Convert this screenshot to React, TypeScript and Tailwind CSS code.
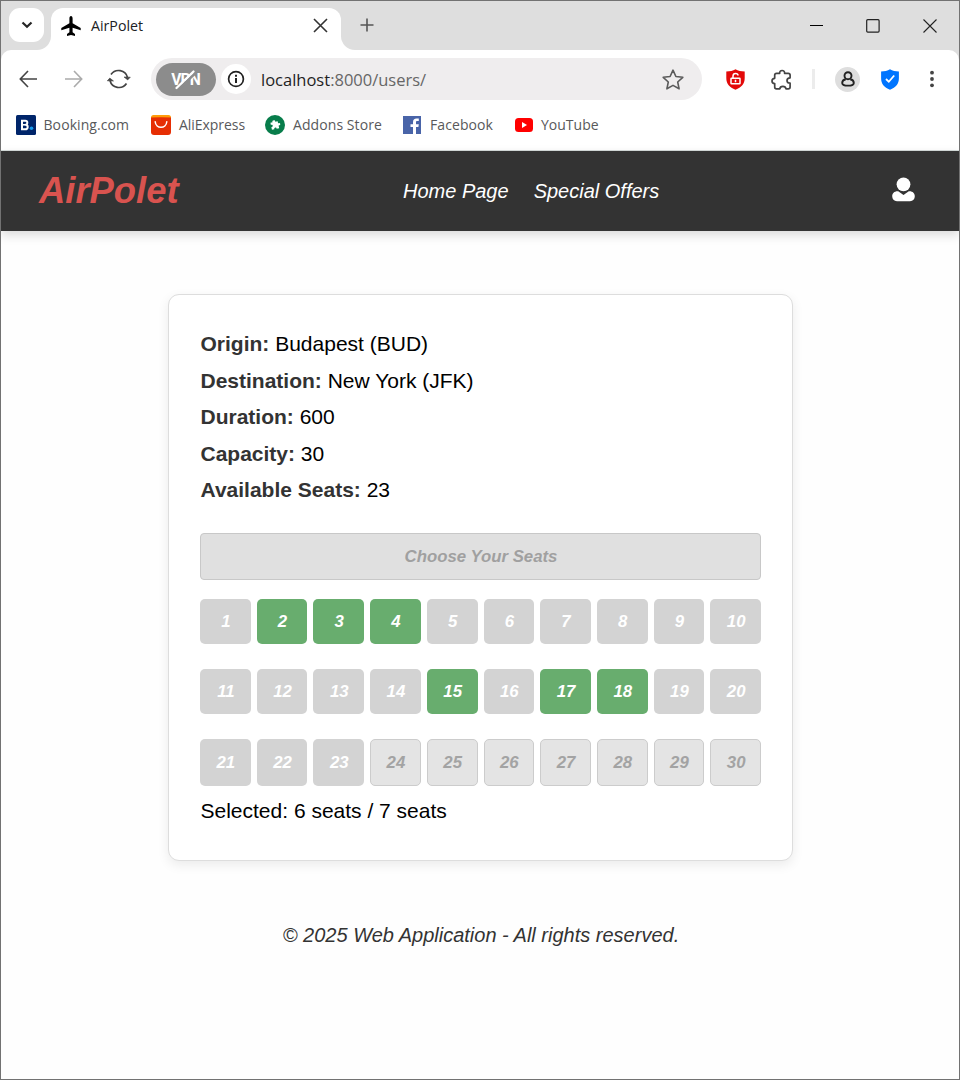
import React from "react";

const bookmarkText = "whitespace-nowrap font-['Open_Sans',sans-serif] text-[14px] leading-5 text-[#58595b]";

const taken = [1, 5, 6, 7, 8, 9, 10, 11, 12, 13, 14, 16, 19, 20, 21, 22, 23];
const selected = [2, 3, 4, 15, 17, 18];

function Seat({ n }: { n: number }) {
  const base = "flex items-center justify-center rounded-[5px] pl-px pt-0.5 text-[16.8px] font-bold italic leading-none ";
  if (selected.includes(n)) return <button className={base + "bg-[#68ad6e] text-white"}>{n}</button>;
  if (taken.includes(n)) return <button className={base + "bg-[#d3d3d3] text-white"}>{n}</button>;
  return <button className={base + "border border-[#cccccc] bg-[#e4e4e4] text-[#a3a3a3]"}>{n}</button>;
}

function TabBar() {
  return (
    <div className="flex h-[49px] shrink-0 items-end bg-[#dedede] pl-2">
      <div className="relative z-10 mb-2 flex h-[34px] w-[35px] items-center justify-center rounded-[11px] bg-white">
        <svg width="12" height="8" viewBox="0 0 12 8" fill="none" stroke="#262626" strokeWidth="2.2"><path d="M1.5 1.5 6 5.8l4.5-4.3" /></svg>
      </div>
      <div className="relative ml-[7px] flex h-[42px] w-[290px] items-center rounded-t-[12px] bg-white pl-2.5">
        <span className="absolute -left-[15px] bottom-0 size-[15px] bg-white"><span className="block size-full rounded-br-[14px] bg-[#dedede]" /></span>
        <span className="absolute -right-[15px] bottom-0 size-[15px] bg-white"><span className="block size-full rounded-bl-[14px] bg-[#dedede]" /></span>
        <div className="-mt-[7px] flex w-full items-center">
          <svg width="20" height="20" viewBox="0 0 20 20"><path d="M10 0c1 0 1.6 1.1 1.6 2.5v4.8l8.1 4.7v2.2l-8.1-2.4v4.5l2.4 1.8V20L10 19l-4 1v-1.9l2.4-1.8v-4.5L.3 14.2V12l8.1-4.7V2.5C8.4 1.1 9 0 10 0Z" fill="#000" /></svg>
          <span className="ml-2.5 font-['Open_Sans',sans-serif] text-[14.2px] leading-5 text-[#202124]">AirPolet</span>
          <svg className="ml-auto mr-[13px]" width="15" height="15" viewBox="0 0 15 15" stroke="#333" strokeWidth="1.6"><path d="m1 1 13 13M14 1 1 14" /></svg>
        </div>
      </div>
      <svg className="mb-[18px] ml-[19px]" width="14" height="14" viewBox="0 0 14 14" stroke="#555" strokeWidth="1.6"><path d="M7 .5v13M.5 7h13" /></svg>
      <div className="mb-[17px] ml-auto mr-[22px] flex items-center gap-[43px]">
        <svg width="13" height="14" viewBox="0 0 13 14" stroke="#000" shapeRendering="crispEdges"><path d="M0 6.5h13" /></svg>
        <svg width="14" height="14" viewBox="0 0 14 14" fill="none" stroke="#222" strokeWidth="1.2"><rect x=".7" y=".7" width="12.4" height="12.4" rx="1" /></svg>
        <svg width="14" height="14" viewBox="0 0 14 14" stroke="#222" strokeWidth="1.1"><path d="m.5.5 13 13M13.500.5l-13 13" /></svg>
      </div>
    </div>
  );
}

function Toolbar() {
  return (
    <div className="bg-[#dedede]">
      <div className="flex h-[58px] items-center rounded-t-[10px] bg-white">
        <svg className="ml-[18px] -mt-px" width="19" height="18" viewBox="0 0 19 18" fill="none" stroke="#444" strokeWidth="1.6"><path d="M18 9H1.500M9 1 1.300 9 9 17" /></svg>
        <svg className="ml-[26px] -mt-px" width="19" height="18" viewBox="0 0 19 18" fill="none" stroke="#ababab" strokeWidth="1.6"><path d="M1 9h16.500M10 1l7.700 8L10 17" /></svg>
        <svg className="-mt-px ml-6" width="24" height="20" viewBox="0 0 24 20" fill="none" stroke="#444" strokeWidth="1.7">
          <path d="M4 5.500A9.200 9.200 0 0 1 20.500 8.500M19.500 14.500A9.200 9.200 0 0 1 3 11.500" />
          <path d="m17 8 6.300.2-2.600 2.700ZM6.500 12 .3 11.800l2.500-2.700Z" fill="#444" strokeWidth=".6" />
        </svg>
        <div className="ml-5 flex h-[42px] w-[551px] items-center rounded-full bg-[#efedee] pl-[5px]">
          <div className="relative flex h-[33px] w-[60px] shrink-0 items-center justify-center rounded-full bg-[#8c8c8c] font-['Roboto',sans-serif] text-[17px] font-bold leading-none text-white">
            <span className="pt-px inline-block scale-x-[0.92] tracking-[-1px]">VPN</span>
            <svg className="absolute left-4 top-1.5" width="28" height="22" viewBox="0 0 28 22" strokeLinecap="round"><path d="M7 19.500 23.500 4" stroke="#8c8c8c" strokeWidth="2.500" /><path d="M4.500 19 21.500 2.500" stroke="#fff" strokeWidth="2.300" /></svg>
          </div>
          <div className="ml-[5px] flex size-[30px] shrink-0 items-center justify-center rounded-full bg-white">
            <svg width="18" height="18" viewBox="0 0 18 18" fill="none" stroke="#222" strokeWidth="1.700"><circle cx="9" cy="9" r="7.400" /><path d="M9 8v5M9 4.800v1.900" strokeWidth="2" /></svg>
          </div>
          <span className="ml-2.5 pt-px font-['Open_Sans',sans-serif] text-[16.5px] leading-6 text-[#666]"><span className="text-[#1f1f1f]">localhost</span>:8000/users/</span>
          <svg className="ml-auto mr-[18px] mt-px" width="22" height="22" viewBox="0 0 22 22" fill="none" stroke="#5b5b5b" strokeWidth="1.600" strokeLinejoin="round"><path d="m11 1.200 2.900 6.300 6.900.8-5.100 4.700 1.400 6.800-6.100-3.400-6.100 3.400 1.400-6.800L1.200 8.300l6.900-.8L11 1.200Z" /></svg>
        </div>
        <svg className="ml-6" width="19" height="21" viewBox="0 0 19 21" fill="none"><path d="M9.500.3C12 2 15 2.500 18.700 2.500V9c0 6-3.300 9.500-9.200 11.700C3.600 18.500.3 15 .3 9V2.500C4 2.500 7 2 9.500.3Z" fill="#e30909" /><g stroke="#fff" strokeWidth="1.500"><rect x="5" y="9.200" width="9" height="5.500" rx=".5" /><path d="M7 9V7C7 5 8 4.400 9.500 4.400S12 5.200 12 6.400M9.500 10.700v2.500" /></g></svg>
        <svg className="ml-[26px] mt-0.5" width="22" height="22" viewBox="0 0 22 22" fill="none" stroke="#444" strokeWidth="1.700" strokeLinejoin="round"><path d="M5.500 4.300H8.700C8.500 2.500 9.500 1.500 11.100 1.500S13.800 2.500 13.600 4.300h3.600c1.300 0 1.900.6 1.900 1.800v2.700c-2 0-3.100 1-3.100 2.700s1.100 2.700 3.100 2.700V18c0 1.200-.6 1.800-1.900 1.800H15c-.3-1.700-1.600-2.500-3.100-2.500s-2.900.8-3.100 2.500H5.500c-1.200 0-1.800-.6-1.800-1.800v-3.500C2 14.400 1 13.400 1 11.900S2 9.400 3.700 9.300V6.100c0-1.200.6-1.800 1.800-1.800Z" /></svg>
        <span className="ml-[19px] h-5 w-[3px] bg-[#ececec]" />
        <span className="ml-5 flex size-[25px] items-center justify-center rounded-full bg-[#dedede]"><svg width="14" height="16" viewBox="0 0 14 16" fill="none" stroke="#222" strokeWidth="1.900"><circle cx="7" cy="4.700" r="3.500" /><path d="M4.800 8.200C2.300 8.700 1.200 10.100 1.200 11.900c0 1.800 1.400 2.700 5.800 2.700s5.800-.9 5.800-2.700c0-1.800-1.100-3.200-3.600-3.700" /></svg></span>
        <svg className="ml-[21px]" width="18" height="21" viewBox="0 0 18 21" fill="none"><path d="M9 .3C11.500 2 14.500 2.500 17.900 2.500V9c0 6-3 9.500-8.900 11.700C3.100 18.500.1 15 .1 9V2.500C3.500 2.500 6.500 2 9 .3Z" fill="#0075ff" /><path d="m5 10 2.800 2.800L13.200 6.500" stroke="#fff" strokeWidth="1.800" /></svg>
        <svg className="ml-[31px] -mt-px" width="4" height="18" viewBox="0 0 4 18" fill="#444"><circle cx="2" cy="2.700" r="1.900" /><circle cx="2" cy="9" r="1.900" /><circle cx="2" cy="15.300" r="1.900" /></svg>
      </div>
    </div>
  );
}

function Bookmarks() {
  return (
    <div className="flex h-[43px] items-start border-b border-[#d5dcda] bg-white pl-[15px] pt-[7px]">
      <div className="flex w-[135px] items-center gap-[7.500px]">
        <svg width="20" height="20" viewBox="0 0 20 20" className="shrink-0"><rect width="20" height="20" rx="1.500" fill="#00256a" /><path d="M6 5.800h3.300c2.700 0 2.600 3.500.3 3.900 3 .3 2.700 4.500-.3 4.500H6Z" fill="none" stroke="#fff" strokeWidth="2" /><path d="M6 9.800h4" stroke="#fff" strokeWidth="1.600" /><circle cx="15.500" cy="13.200" r="1.800" fill="#169bed" /></svg>
        <span className={bookmarkText + " tracking-[0.08px]"}>Booking.com</span>
      </div>
      <div className="flex w-[114px] items-center gap-2">
        <svg width="20" height="20" viewBox="0 0 20 20" className="shrink-0"><rect width="20" height="10" rx="2.500" fill="#ff9c0a" /><path d="M0 2.500q10-.6 20 0V17q0 3-3 3H3q-3 0-3-3Z" fill="#e62e04" /><path d="M4.200 6.800c.6 7.200 11 7.200 11.600 0" fill="none" stroke="#fff" strokeWidth="1.500" strokeLinecap="round" /></svg>
        <span className={bookmarkText + " -tracking-[0.05px]"}>AliExpress</span>
      </div>
      <div className="flex w-[138px] items-center gap-2">
        <svg width="20" height="20" viewBox="0 0 20 20" className="shrink-0"><circle cx="10" cy="10" r="10" fill="#087d4b" /><path transform="rotate(-12 10 10)" d="M6 6.800h2.200C7.300 4.500 11.700 4.500 10.900 6.800h2.500v2.300c2.600-.9 2.600 3 0 2.200v2.800h-2.600c.5-2.200-2.700-2.200-2.300 0H6v-2.800c2.200.5 2.200-2.700 0-2.200Z" fill="#fff" /></svg>
        <span className={bookmarkText + " tracking-[0.08px]"}>Addons Store</span>
      </div>
      <div className="flex w-[112px] items-center gap-[9px]">
        <svg width="18" height="18" viewBox="0 0 18 18" className="shrink-0"><rect width="18" height="18" fill="#4964a8" /><path d="M10 18v-7H7.500V8.200H10V6.300C10 3.700 11.300 2.500 13.600 2.500h2.200v2.600h-1.500c-1 0-1.300.5-1.300 1.400v1.700h2.800l-.4 2.800H13v7Z" fill="#fff" /></svg>
        <span className={bookmarkText + " tracking-[0.08px]"}>Facebook</span>
      </div>
      <div className="flex items-center gap-2">
        <svg width="18" height="14" viewBox="0 0 18 14" className="shrink-0"><rect width="18" height="14" rx="3.500" fill="#f00" /><path d="m7 4 5 3-5 3Z" fill="#fff" /></svg>
        <span className={bookmarkText}>YouTube</span>
      </div>
    </div>
  );
}

export default function App() {
  return (
    <div className="flex h-[1080px] w-[960px] flex-col overflow-hidden border border-[#727272] bg-[#fefefe] font-['Liberation_Sans',Arial,sans-serif]">
      <TabBar />
      <Toolbar />
      <Bookmarks />
      <header className="flex h-20 shrink-0 items-center justify-between bg-[#333] pl-[38px] pr-11 text-white shadow-[0_4px_10px_rgba(0,0,0,0.15)]">
        <div className="w-[364px] text-[36.4px] font-bold italic leading-none text-[#d9534f]">AirPolet</div>
        <nav className="flex flex-1 gap-[25px] text-[20px] italic leading-6"><a>Home Page</a><a>Special Offers</a></nav>
        <svg className="-mt-1" width="23" height="25" viewBox="0 0 23 25" fill="#fff"><circle cx="11.500" cy="7.300" r="6.900" /><path d="M6.200 14.300 11.500 18.100 16.800 14.300C20.600 14 22.800 16.200 22.800 19.300S21 24.200 18 24.200H5C2 24.200.2 22.400.2 19.300S2.400 14 6.200 14.300Z" /></svg>
      </header>
      <main className="ml-[167px] mt-[63px] flex h-[567px] w-[625px] shrink-0 flex-col rounded-[11px] border border-[#ddd] bg-white px-[31px] pt-[31px] text-[21px] leading-[36.5px] text-black shadow-[0_4px_12px_rgba(0,0,0,0.08)]">
        <div className="pl-[0.5px]">
          <p><strong className="text-[#333]">Origin:</strong> Budapest (BUD)</p>
          <p><strong className="text-[#333]">Destination:</strong> New York (JFK)</p>
          <p><strong className="text-[#333]">Duration:</strong> 600</p>
          <p><strong className="text-[#333]">Capacity:</strong> 30</p>
          <p><strong className="text-[#333]">Available Seats:</strong> 23</p>
        </div>
        <button className="mt-[24.5px] flex h-[47px] shrink-0 items-center justify-center rounded-[4px] border border-[#c8c8c8] bg-[#e0e0e0] pl-px pt-0.5 text-[16.8px] font-bold italic leading-none text-[#a0a0a0]">Choose Your Seats</button>
        <div className="mt-[19px] grid shrink-0 grid-cols-10 grid-rows-[45px_45px_47px] gap-x-1.5 gap-y-[25px]">
          {Array.from({ length: 30 }, (_, i) => <Seat key={i} n={i + 1} />)}
        </div>
        <p className="mt-[7px] pl-[0.5px]">Selected: 6 seats / 7 seats</p>
      </main>
      <footer className="mt-[62px] pl-0.5 text-center text-[20px] italic leading-6 text-[#333]">© 2025 Web Application - All rights reserved.</footer>
    </div>
  );
}
